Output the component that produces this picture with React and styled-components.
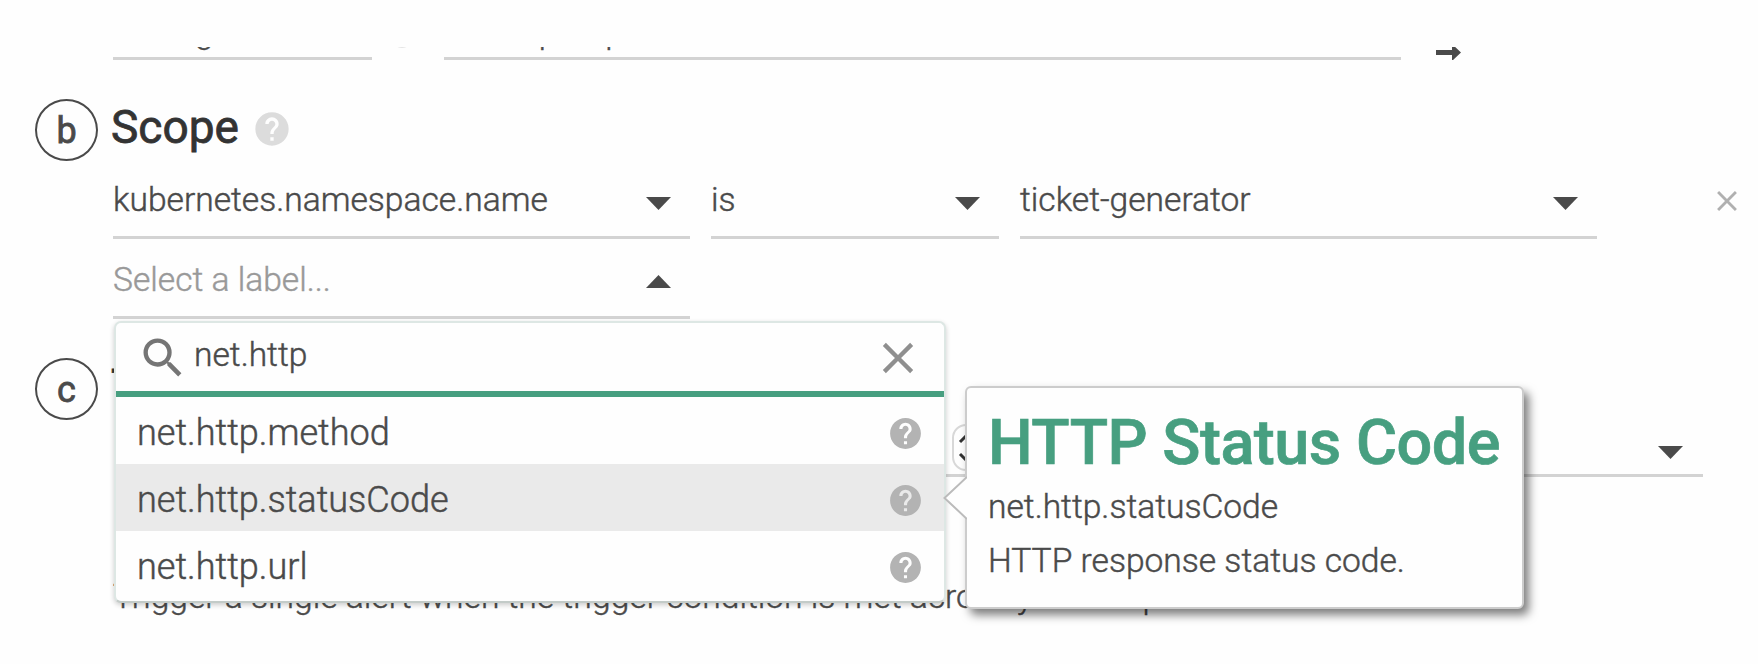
import React from "react";
import styled, { createGlobalStyle } from "styled-components";
import { MdSearch, MdClose, MdHelp } from "react-icons/md";

const GlobalStyle = createGlobalStyle`
  *, *::before, *::after { box-sizing: border-box; }
  body { margin: 0; background: #fefefe; }
  svg { display: block; flex: none; }
`;

const Page = styled.main`
  width: 1758px;
  height: 664px;
  padding: 47px 0 0 35px;
  overflow: hidden;
  background: #fefefe;
  color: #4a4a4a;
  font: 300 33.6px/40px Roboto, sans-serif;
  -webkit-text-stroke: 0.45px;
  white-space: nowrap;
`;

const MetricRow = styled.div`
  display: flex;
  align-items: flex-end;
  height: 13px;
  padding-left: 78px;
  overflow: hidden;
`;

const MetricField = styled.div`
  width: ${(p) => p.$width}px;
  height: 51px;
  padding-top: 3px;
  border-bottom: 3px solid #d3d3d3;
`;

const MetricHelp = styled(MdHelp)`
  margin: 0 22px 9px 10px;
  color: #dcdcdc;
`;

const ArrowSlot = styled.div`
  height: 17px;
  margin: 0 0 -1px 35px;
`;

const SectionHeader = styled.header`
  display: flex;
  height: 60px;
  margin-top: 39px;
`;

const Step = styled.span`
  display: flex;
  justify-content: center;
  width: 63px;
  height: 62px;
  margin-right: 13px;
  border: 2px solid #4a4a4a;
  border-radius: 50%;
  font-size: 36px;
  font-weight: 400;
  line-height: 60px;
  -webkit-text-stroke: 0.8px;
`;

const Heading = styled.h2`
  margin: -2px 13px 0 0;
  color: #333;
  font-size: 46px;
  font-weight: 400;
  line-height: 60px;
  -webkit-text-stroke: 0.8px;
`;

const HeadingHelp = styled(MdHelp)`
  margin-top: 10px;
  color: #dcdcdc;
`;

const FilterRow = styled.div`
  display: flex;
  height: 80px;
  padding-left: 78px;
`;

const Select = styled.div`
  position: relative;
  display: flex;
  justify-content: space-between;
  width: ${(p) => p.$width}px;
  height: 80px;
  margin-right: 21px;
  padding: 21px 19px 0 0;
  border-bottom: 3px solid #d3d3d3;
  color: ${(p) => (p.$open ? "#999" : "#4a4a4a")};
`;

const CaretIcon = styled.svg`
  width: 25px;
  height: 13px;
  margin-top: ${(p) => p.$top}px;
  fill: #4a4a4a;
`;

const RemoveButton = styled.span`
  margin: 25px 0 0 92px;
  color: #b0b0b0;
`;

const Dropdown = styled.div`
  position: absolute;
  z-index: 2;
  top: 82px;
  left: 1px;
  width: 832px;
  height: 282px;
  border: 2px solid #dde7e4;
  border-bottom-color: #c3cbc8;
  border-radius: 7px;
  background: #fefefe;
  box-shadow: 0 2px 5px rgba(0, 0, 0, 0.2);
  color: #4a4a4a;
`;

const SearchBar = styled.div`
  display: flex;
  height: 74px;
  padding: 9px 20px 0 21px;
  border-bottom: 6px solid #479f80;
`;

const SearchIcon = styled(MdSearch)`
  color: #757575;
`;

const SearchText = styled.span`
  flex: 1;
  padding: 3px 0 0 5px;
`;

const ClearIcon = styled(MdClose)`
  color: #8f8f8f;
`;

const Option = styled.div`
  position: relative;
  display: flex;
  align-items: center;
  justify-content: space-between;
  height: 67px;
  padding: 5px 20px 0 21px;
  background: ${(p) => (p.$active ? "#eaeaea" : "transparent")};
  font-size: 36.1px;
  line-height: 64px;
`;

const OptionHelp = styled(MdHelp)`
  color: #b3b3b3;
`;

const Tooltip = styled.div`
  position: absolute;
  z-index: 3;
  top: -78px;
  left: 849px;
  width: 559px;
  height: 223px;
  padding: 19px 0 0 21px;
  border: 2px solid #ccc;
  border-radius: 6px;
  background: #fefefe;
  box-shadow: 5px 6px 10px rgba(0, 0, 0, 0.5);
  font-size: 33.6px;
  line-height: 54px;
`;

const Pointer = styled.svg`
  position: absolute;
  top: 88px;
  left: -24px;
  width: 24px;
  height: 44px;
`;

const TooltipTitle = styled.div`
  height: 73px;
  color: #479f80;
  font-size: 63px;
  font-weight: 500;
  line-height: 72px;
  letter-spacing: -0.52px;
  -webkit-text-stroke: 0.7px;
`;

const TooltipText = styled.div``;

const TriggerRow = styled.div`
  display: flex;
  align-items: flex-start;
  justify-content: space-between;
  width: 1578px;
  height: 59px;
  margin-left: 90px;
  padding: 6px 20px 0 827px;
  border-bottom: 3px solid #d3d3d3;
`;

const Stepper = styled.span`
  display: flex;
  align-items: center;
  justify-content: center;
  width: 30px;
  height: 47px;
  border: 2px solid #d8d8d8;
  border-radius: 14px;
`;

const Description = styled.p`
  margin: 100px 0 0 78px;
`;

function Caret({ up, top }) {
  return (
    <CaretIcon viewBox="0 0 25 13" $top={top}>
      <path d={up ? "M0 13 12.5 0 25 13z" : "M0 0h25L12.5 13z"} />
    </CaretIcon>
  );
}

const options = [
  { label: "net.http.method" },
  { label: "net.http.statusCode", active: true },
  { label: "net.http.url" },
];

export default function App() {
  return (
    <Page>
      <GlobalStyle />
      <MetricRow>
        <MetricField $width={259}>Average</MetricField>
        <MetricHelp size={40} />
        <MetricField $width={957}>net.http.request.count</MetricField>
        <ArrowSlot>
          <svg width="25" height="17" viewBox="0 0 25 17">
            <path d="M0 6h16V0l9 8.500L16 17v-6H0z" fill="#4a4a4a" />
          </svg>
        </ArrowSlot>
      </MetricRow>

      <SectionHeader>
        <Step>b</Step>
        <Heading>Scope</Heading>
        <HeadingHelp size={40} />
      </SectionHeader>

      <FilterRow>
        <Select $width={577}>kubernetes.namespace.name<Caret top={17} /></Select>
        <Select $width={288}>is<Caret top={17} /></Select>
        <Select $width={577}>ticket-generator<Caret top={17} /></Select>
        <RemoveButton><MdClose size={34} /></RemoveButton>
      </FilterRow>

      <FilterRow>
        <Select $width={577} $open>
          Select a label...
          <Caret up top={15} />
          <Dropdown>
            <SearchBar>
              <SearchIcon size={52} />
              <SearchText>net.http</SearchText>
              <ClearIcon size={52} />
            </SearchBar>
            {options.map((o) => (
              <Option key={o.label} $active={o.active}>
                {o.label}
                <OptionHelp size={37} />
                {o.active && (
                  <Tooltip>
                    <Pointer viewBox="0 0 24 44">
                      <path d="M24 1 1.500 22 24 43" fill="#fefefe" stroke="#bbb" strokeWidth="2" />
                    </Pointer>
                    <TooltipTitle>HTTP Status Code</TooltipTitle>
                    <TooltipText>net.http.statusCode</TooltipText>
                    <TooltipText>HTTP response status code.</TooltipText>
                  </Tooltip>
                )}
              </Option>
            ))}
          </Dropdown>
        </Select>
      </FilterRow>

      <SectionHeader>
        <Step>c</Step>
        <Heading>Trigger</Heading>
      </SectionHeader>
      <TriggerRow>
        <Stepper>
          <svg width="20" height="30" viewBox="0 0 20 30" fill="none" stroke="#333" strokeWidth="3">
            <path d="M3 9 10 2l7 7M3 21l7 7 7-7" />
          </svg>
        </Stepper>
        <Caret top={22} />
      </TriggerRow>
      <Description>Trigger a single alert when the trigger condition is met across your scope.</Description>
    </Page>
  );
}
